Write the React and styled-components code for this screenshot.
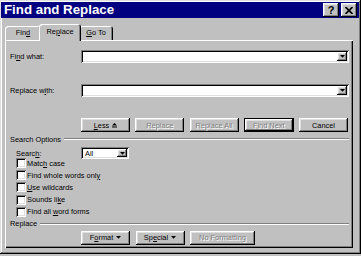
import React from "react";
import styled, { createGlobalStyle } from "styled-components";

const GlobalStyle = createGlobalStyle`
  html, body {
    margin: 0;
    padding: 0;
    background: #c0c0c0;
  }
  body {
    font-family: "Liberation Sans", Arial, sans-serif;
  }
`;

const raised = `
  box-shadow: inset -1px -1px #000, inset 1px 1px #fff,
    inset -2px -2px #808080, inset 2px 2px #dfdfdf;
`;
const sunken = `
  box-shadow: inset 1px 1px #808080, inset -1px -1px #fff,
    inset 2px 2px #000, inset -2px -2px #dfdfdf;
`;

const Window = styled.div`
  width: 361px;
  height: 254px;
  box-sizing: border-box;
  padding: 2px 2px 2px 1px;
  background: #c0c0c0;
  box-shadow: inset -1px -1px #000, inset 1px 1px #dfdfdf,
    inset -2px -2px #808080, inset 2px 2px #fff;
  display: flex;
  flex-direction: column;
`;

const TitleBar = styled.div`
  height: 16px;
  background: #000080;
  display: flex;
  align-items: center;
  padding: 0 2px;
`;

const Title = styled.div`
  flex: 1;
  color: #fff;
  font-weight: bold;
  font-size: 13.3px;
  line-height: 16px;
  padding-left: 1px;
`;

const TitleButton = styled.div`
  width: 16px;
  height: 14px;
  box-sizing: border-box;
  margin-left: ${(p) => p.$gap || 0}px;
  background: #c0c0c0;
  ${raised}
  display: flex;
  align-items: center;
  justify-content: center;
  font-weight: bold;
  font-size: 11px;
  color: #000;
`;

const TabStrip = styled.div`
  height: 22px;
  display: flex;
  align-items: flex-end;
  padding-left: 4px;
  position: relative;
  z-index: 1;
`;

const Tab = styled.div`
  width: ${(p) => (p.$active ? p.$w + 4 : p.$w)}px;
  height: ${(p) => (p.$active ? 17 : 14)}px;
  margin: ${(p) => (p.$active ? "0 -2px -1px" : "0")};
  box-sizing: border-box;
  background: #c0c0c0;
  border-radius: 3px 3px 0 0;
  box-shadow: inset 1px 1px #fff, inset -1px 0 #000, inset -2px 0 #808080;
  font-size: 7.4px;
  line-height: ${(p) => (p.$active ? 15 : 14)}px;
  text-align: center;
  color: #000;
  position: relative;
  z-index: ${(p) => (p.$active ? 2 : 1)};
`;

const Panel = styled.div`
  height: 208px;
  margin: 0 6px 0 4px;
  box-sizing: border-box;
  padding: 0 4px 0 5px;
  box-shadow: inset 1px 1px #fff, inset -1px -1px #000, inset -2px -2px #808080;
  display: flex;
  flex-direction: column;
  font-size: 7.4px;
  color: #000;
`;

const FieldRow = styled.div`
  display: grid;
  grid-template-columns: ${(p) => p.$label || 71}px 1fr;
  align-items: center;
  height: ${(p) => p.$h || 13}px;
  margin-top: ${(p) => p.$top || 0}px;
  padding-left: ${(p) => p.$indent || 0}px;
`;

const Label = styled.span`
  white-space: nowrap;
`;

const Key = styled.span`
  text-decoration: underline;
`;

const Combo = styled.div`
  height: ${(p) => p.$h || 13}px;
  width: ${(p) => (p.$w ? `${p.$w}px` : "auto")};
  box-sizing: border-box;
  background: #fff;
  ${sunken}
  display: flex;
  align-items: center;
  padding: 0 2px 0 4px;
`;

const ComboText = styled.span`
  flex: 1;
  font-size: 7.4px;
`;

const DropButton = styled.div`
  width: 10px;
  height: ${(p) => p.$h || 9}px;
  box-sizing: border-box;
  background: #c0c0c0;
  ${raised}
  display: flex;
  align-items: center;
  justify-content: center;
`;

const ButtonRow = styled.div`
  display: flex;
  justify-content: ${(p) => (p.$spread ? "space-between" : "flex-start")};
  gap: ${(p) => (p.$spread ? 0 : 5.5)}px;
  margin-top: ${(p) => p.$top || 0}px;
  margin-left: 71px;
  padding-right: 1px;
  height: 14px;
`;

const Button = styled.div`
  width: ${(p) => p.$w || 49}px;
  height: 14px;
  box-sizing: border-box;
  background: #c0c0c0;
  ${raised}
  ${(p) =>
    p.$default &&
    `box-shadow: inset 0 0 0 1px #000, inset -2px -2px #000, inset 2px 2px #fff,
      inset -3px -3px #808080, inset 3px 3px #dfdfdf;`}
  display: flex;
  align-items: center;
  justify-content: center;
  gap: 3px;
  font-size: 7.4px;
  color: ${(p) => (p.$disabled ? "#808080" : "#000")};
  text-shadow: ${(p) => (p.$disabled ? "1px 1px 0 #fff" : "none")};
  white-space: nowrap;
`;

const GroupHeader = styled.div`
  display: flex;
  align-items: center;
  height: 10px;
  margin-top: ${(p) => p.$top || 0}px;
`;

const GroupLine = styled.div`
  flex: 1;
  height: 0;
  margin-left: 3px;
  border-top: 1px solid #808080;
  border-bottom: 1px solid #fff;
`;

const CheckList = styled.div`
  display: flex;
  flex-direction: column;
  margin-top: -2px;
  padding-left: 6px;
`;

const CheckRow = styled.div`
  height: 12.2px;
  display: flex;
  align-items: center;
  gap: 1px;
`;

const CheckBox = styled.div`
  width: 10px;
  height: 10px;
  box-sizing: border-box;
  background: #fff;
  ${sunken}
`;

const Arrow = ({ up }) => (
  <svg width="5" height="5" viewBox="0 0 5 5">
    {up ? (
      <>
        <path d="M2.5 0 L5 2.5 L0 2.5 Z" fill="#000" />
        <rect x="0" y="3.5" width="5" height="1" fill="#000" />
      </>
    ) : (
      <path d="M0 1 L5 1 L2.5 3.8 Z" fill="#000" />
    )}
  </svg>
);

const options = [
  ["Matc", "h", " case"],
  ["Find whole words onl", "y", ""],
  ["", "U", "se wildcards"],
  ["Sounds li", "k", "e"],
  ["Find all ", "w", "ord forms"],
];

export default function App() {
  return (
    <>
      <GlobalStyle />
      <Window>
        <TitleBar>
          <Title>Find and Replace</Title>
          <TitleButton>?</TitleButton>
          <TitleButton $gap={2}>
            <svg width="8" height="7" viewBox="0 0 8 7">
              <path d="M0.5 0 L7.5 7 M7.5 0 L0.5 7" stroke="#000" strokeWidth="1.7" />
            </svg>
          </TitleButton>
        </TitleBar>

        <TabStrip>
          <Tab $w={36}>
            Fin<Key>d</Key>
          </Tab>
          <Tab $w={38} $active>
            Re<Key>p</Key>lace
          </Tab>
          <Tab $w={34}>
            <Key>G</Key>o To
          </Tab>
        </TabStrip>

        <Panel>
          <FieldRow $top={10}>
            <Label>
              Fi<Key>n</Key>d what:
            </Label>
            <Combo>
              <ComboText />
              <DropButton>
                <Arrow />
              </DropButton>
            </Combo>
          </FieldRow>

          <FieldRow $top={21}>
            <Label>
              Replace w<Key>i</Key>th:
            </Label>
            <Combo>
              <ComboText />
              <DropButton>
                <Arrow />
              </DropButton>
            </Combo>
          </FieldRow>

          <ButtonRow $spread $top={21}>
            <Button>
              <span>
                <Key>L</Key>ess
              </span>
              <Arrow up />
            </Button>
            <Button $disabled>Replace</Button>
            <Button $disabled>Replace All</Button>
            <Button $disabled $default $w={50}>
              Find Next
            </Button>
            <Button>Cancel</Button>
          </ButtonRow>

          <GroupHeader $top={2}>
            <Label>Search Options</Label>
            <GroupLine />
          </GroupHeader>

          <FieldRow $top={3} $h={12} $label={65} $indent={6}>
            <Label>
              Searc<Key>h</Key>:
            </Label>
            <Combo $w={48} $h={12}>
              <ComboText>All</ComboText>
              <DropButton $h={8}>
                <Arrow />
              </DropButton>
            </Combo>
          </FieldRow>

          <CheckList>
            {options.map(([a, k, b]) => (
              <CheckRow key={a + k + b}>
                <CheckBox />
                <Label>
                  {a}
                  <Key>{k}</Key>
                  {b}
                </Label>
              </CheckRow>
            ))}
          </CheckList>

          <GroupHeader $top={1}>
            <Label>Replace</Label>
            <GroupLine />
          </GroupHeader>

          <ButtonRow $top={2}>
            <Button>
              <span>
                F<Key>o</Key>rmat
              </span>
              <Arrow />
            </Button>
            <Button>
              <span>
                Sp<Key>e</Key>cial
              </span>
              <Arrow />
            </Button>
            <Button $disabled $w={65}>
              No Formatting
            </Button>
          </ButtonRow>
        </Panel>
      </Window>
    </>
  );
}
